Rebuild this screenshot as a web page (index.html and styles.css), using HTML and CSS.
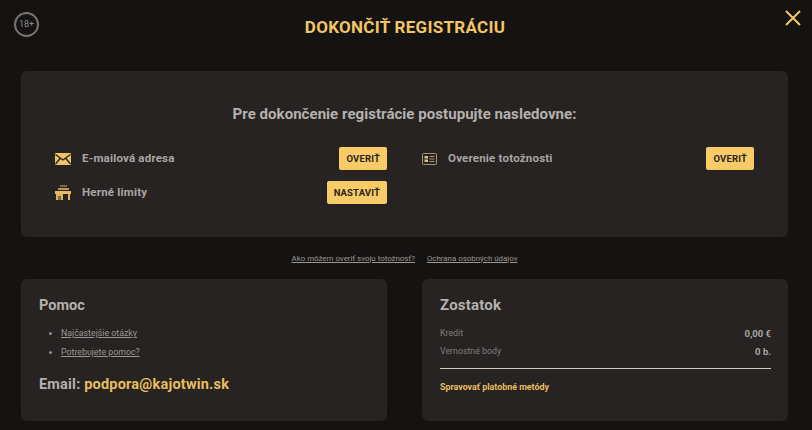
FILE: index.html
```html
<!DOCTYPE html>
<html>
<head>
    <meta name="viewport" content="width=device-width, initial-scale=1">
    <title>Dokončiť registráciu</title>
    <link rel="stylesheet" href="styles.css">
</head>
<body>
    <header class="top">
        <div class="age">18+</div>
        <h1>DOKONČIŤ REGISTRÁCIU</h1>
        <svg class="close" width="16" height="16" viewBox="0 0 16 16">
            <path d="M1 1L15 15M15 1L1 15" stroke="#f5c762" stroke-width="2" fill="none"/>
        </svg>
    </header>

    <section class="card steps">
        <h2>Pre dokončenie registrácie postupujte nasledovne:</h2>
        <div class="step-grid">
            <div class="step">
                <svg class="icon" width="16" height="12" viewBox="0 0 16 12">
                    <rect width="16" height="12" rx="1" fill="#f0c565"/>
                    <path d="M0.5 1.5L8 7L15.5 1.5M0.5 11L5.5 5M15.5 11L10.5 5" stroke="#272322" stroke-width="1.4" fill="none"/>
                </svg>
                <span class="step-name">E-mailová adresa</span>
                <button class="btn">OVERIŤ</button>
            </div>
            <div class="step">
                <svg class="icon" width="15" height="12" viewBox="0 0 15 12">
                    <rect x="0.5" y="0.5" width="14" height="11" rx="1" fill="none" stroke="#a8986f"/>
                    <rect x="2.5" y="3" width="3.5" height="2.5" fill="#d8c48f"/>
                    <rect x="2.5" y="6.5" width="3.5" height="2.5" fill="#d8c48f"/>
                    <path d="M7.5 3.5H12.5M7.5 6H12.5M7.5 8.5H12.5" stroke="#a8986f"/>
                </svg>
                <span class="step-name">Overenie totožnosti</span>
                <button class="btn">OVERIŤ</button>
            </div>
            <div class="step">
                <svg class="icon" width="16" height="15" viewBox="0 0 16 15">
                    <path d="M5 0H12V2H5Z" fill="#7d6d47"/>
                    <path d="M3 3H14V5H3Z" fill="#b49a58"/>
                    <path d="M0 6H16V9H0Z" fill="#e6bd60"/>
                    <path d="M1 9H8V15H1ZM13 9H15V15H13Z" fill="#d9b45c"/>
                    <path d="M3 11H6V15H3Z" fill="#7d6d47"/>
                </svg>
                <span class="step-name">Herné limity</span>
                <button class="btn">NASTAVIŤ</button>
            </div>
        </div>
    </section>

    <nav class="links">
        <a href="#">Ako môžem overiť svoju totožnosť?</a>
        <a href="#">Ochrana osobných údajov</a>
    </nav>

    <div class="bottom">
        <section class="card help">
            <h3>Pomoc</h3>
            <ul>
                <li><a href="#">Najčastejšie otázky</a></li>
                <li><a href="#">Potrebujete pomoc?</a></li>
            </ul>
            <p class="email">Email: <span>podpora@kajotwin.sk</span></p>
        </section>
        <section class="card balance">
            <h3>Zostatok</h3>
            <div class="line"><span>Kredit</span><b>0,00 €</b></div>
            <div class="line"><span>Vernostné body</span><b>0 b.</b></div>
            <hr>
            <a class="manage" href="#">Spravovať platobné metódy</a>
        </section>
    </div>
</body>
</html>
```

FILE: styles.css
```css
body {
    font-family: Roboto, Arial, sans-serif;
    background-color: #151312;
    color: #b4b1ae;
    margin: 0;
    padding: 0 24px 0 21px;
    height: 430px;
    box-sizing: border-box;
    overflow: hidden;
}

.top {
    height: 71px;
    display: grid;
    grid-template-columns: 1fr auto 1fr;
    align-items: start;
    margin-right: -24px;
    margin-left: -21px;
    padding: 10px 11px 0 14px;
    box-sizing: border-box;
}

.age {
    width: 25px;
    height: 25px;
    box-sizing: border-box;
    border: 2px solid #77736f;
    border-radius: 50%;
    margin-top: 2px;
    font-size: 9px;
    line-height: 21px;
    text-align: center;
    color: #8b8784;
}

h1 {
    margin: 0 5px 0 0;
    font-size: 17px;
    line-height: 35px;
    font-weight: 700;
    letter-spacing: 0.28px;
    color: #f2c565;
}

.close {
    justify-self: end;
}

.card {
    background-color: #272322;
    border-radius: 6px;
    box-sizing: border-box;
}

.steps {
    height: 166px;
    padding: 33px 34px 0;
}

h2 {
    margin: 0 0 22px;
    text-align: center;
    font-size: 15px;
    line-height: 21px;
    font-weight: 700;
    letter-spacing: 0.05px;
    color: #b4b1ae;
}

.step-grid {
    display: grid;
    grid-template-columns: 1fr 1fr;
    column-gap: 35px;
    row-gap: 11px;
}

.step {
    display: flex;
    align-items: center;
    height: 23px;
}

.icon {
    flex: none;
    margin-right: 11px;
}

.step-name {
    flex: 1;
    margin-top: -1px;
    font-size: 11.5px;
    font-weight: 700;
    letter-spacing: 0.2px;
    color: #a9a6a3;
}

.btn {
    height: 23px;
    padding: 0 7px;
    border: none;
    border-radius: 2px;
    background-color: #f7cc67;
    color: #2a2420;
    font-family: inherit;
    font-size: 9.5px;
    font-weight: 700;
    letter-spacing: 0.15px;
}

.links {
    height: 42px;
    display: flex;
    justify-content: center;
    align-items: center;
    gap: 12px;
}

.links a {
    color: #9a9794;
    font-size: 7.9px;
}

.bottom {
    display: grid;
    grid-template-columns: 366px 366px;
    column-gap: 35px;
}

.help,
.balance {
    height: 142px;
    padding: 17px 17px 0 18px;
}

.help {
    padding-top: 18px;
}

h3 {
    margin: 0;
    font-size: 14.5px;
    line-height: 18px;
    font-weight: 700;
    color: #b4b1ae;
}

.help ul {
    margin: 9px 0 0;
    padding-left: 22px;
    color: #8f8c89;
    font-size: 8.8px;
}

.help a {
    color: #9a9794;
}

.help li {
    height: 19px;
    line-height: 19px;
}

.email {
    margin: 13px 0 0;
    font-size: 14.5px;
    line-height: 20px;
    font-weight: 700;
    letter-spacing: 0.2px;
    color: #b4b1ae;
}

.email span {
    color: #e8bd5f;
}

.balance h3 {
    font-size: 15px;
    letter-spacing: 0.2px;
}

.line {
    display: flex;
    justify-content: space-between;
    align-items: center;
    height: 18px;
    font-size: 8.8px;
    color: #807d7a;
}

.balance h3 + .line {
    margin-top: 10px;
}

.line b {
    font-size: 9.5px;
    color: #a9a6a3;
}

.balance hr {
    border: none;
    border-top: 1px solid #c9c6c3;
    margin: 8px 0 0;
}

.manage {
    display: block;
    margin-top: 13px;
    font-size: 8.9px;
    font-weight: 700;
    color: #e8bd5f;
    text-decoration: none;
}
```
